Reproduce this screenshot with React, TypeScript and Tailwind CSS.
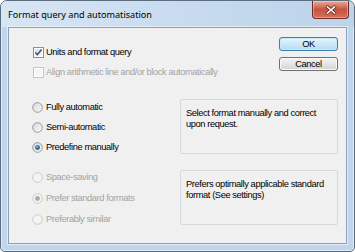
import React from 'react';

const txt = "font-['Liberation_Sans',Arial,sans-serif] text-[9.3px] tracking-[-0.4px] leading-[11px]";

const CheckBox = ({ checked, disabled }: { checked?: boolean; disabled?: boolean }) => (
  <svg width="11" height="11" viewBox="0 0 11 11" className="shrink-0">
    <defs>
      <linearGradient id={disabled ? 'cbd' : 'cbe'} x1="0" y1="0" x2="1" y2="1">
        <stop offset="0" stopColor={disabled ? '#f4f4f4' : '#d9dcdf'} />
        <stop offset="1" stopColor={disabled ? '#f4f4f4' : '#fafafa'} />
      </linearGradient>
    </defs>
    <rect x="0.5" y="0.5" width="10" height="10" fill="#fff" stroke={disabled ? '#c4c4c4' : '#8e8f8f'} />
    <rect x="2" y="2" width="7" height="7" fill={`url(#${disabled ? 'cbd' : 'cbe'})`} />
    {checked && <path d="M2.3 5.4 L4.4 7.6 L8.6 2.6" fill="none" stroke="#3f4e8c" strokeWidth="1.5" />}
  </svg>
);

const Radio = ({ checked, disabled }: { checked?: boolean; disabled?: boolean }) => (
  <svg width="11" height="11" viewBox="0 0 11 11" className="shrink-0">
    <defs>
      <linearGradient id="rbe" x1="0" y1="0" x2="1" y2="1">
        <stop offset="0" stopColor="#d6d8db" />
        <stop offset="1" stopColor="#fbfbfb" />
      </linearGradient>
      <radialGradient id="rdot" cx="0.4" cy="0.35" r="0.7">
        <stop offset="0" stopColor="#7fc0ec" />
        <stop offset="0.6" stopColor="#2d6aa3" />
        <stop offset="1" stopColor="#163f6b" />
      </radialGradient>
    </defs>
    <circle cx="5.5" cy="5.5" r="4.8" fill={disabled ? '#f4f4f4' : 'url(#rbe)'} stroke={disabled ? '#c6c6c6' : '#8e8f8f'} strokeWidth="0.9" />
    {checked && <circle cx="5.5" cy="5.5" r="2.4" fill={disabled ? '#a9a9a9' : 'url(#rdot)'} />}
  </svg>
);

const CheckRow = ({ label, checked, disabled }: { label: string; checked?: boolean; disabled?: boolean }) => (
  <div className="flex items-center h-[11px] gap-[2px]">
    <CheckBox checked={checked} disabled={disabled} />
    <span className={`${txt} whitespace-nowrap ${disabled ? 'text-[#a3a3a3]' : 'text-black'}`}>{label}</span>
  </div>
);

const RadioRow = ({ label, checked, disabled }: { label: string; checked?: boolean; disabled?: boolean }) => (
  <div className="flex items-center h-[11px] gap-[3px]">
    <Radio checked={checked} disabled={disabled} />
    <span className={`${txt} whitespace-nowrap ${disabled ? 'text-[#a3a3a3]' : 'text-black'}`}>{label}</span>
  </div>
);

const InfoBox = ({ children }: { children: React.ReactNode }) => (
  <div className="w-[158px] h-[55px] mr-[8px] rounded-[2px] border border-[#d5d9dd] pl-[5px] pt-[8px]">
    <p className={`${txt} text-black`}>{children}</p>
  </div>
);

const App = () => {
  return (
    <div className="w-[355px] h-[252px] flex flex-col rounded-t-[7px] rounded-b-[5px] border border-[#5d6d80] bg-[#c1d6ec] shadow-[inset_0_0_0_1px_rgba(255,255,255,0.55)] overflow-hidden">
      {/* title bar */}
      <div className="h-[26px] flex items-start justify-between pl-[7px] pr-[5px] bg-linear-to-r from-[#d7e6f5] via-[#c8dbef] to-[#bdd3ea]">
        <span className="mt-[7px] font-['Noto_Sans',Arial,sans-serif] text-[9.1px] leading-[13px] text-black">
          Format query and automatisation
        </span>
        <div className="w-[37px] h-[18px] flex items-center justify-center rounded-b-[4px] border border-t-0 border-[#6e2c22] bg-linear-to-b from-[#e9ab9a] via-[#c75440] to-[#d4705c] shadow-[inset_0_0_0_1px_rgba(255,255,255,0.35)]">
          <svg width="12" height="10" viewBox="0 0 12 10">
            <path d="M2.5 2 L9.5 8 M9.5 2 L2.5 8" stroke="#6a2419" strokeWidth="3" strokeLinecap="square" />
            <path d="M2.5 2 L9.5 8 M9.5 2 L2.5 8" stroke="#ffffff" strokeWidth="1.6" strokeLinecap="square" />
          </svg>
        </div>
      </div>

      {/* client area */}
      <div className="mx-[7px] h-[217px] border border-[#8ba1ba] bg-[#f0f0f0] shadow-[0_0_0_1px_rgba(255,255,255,0.5)] flex flex-col">
        <div className="mt-[9px] flex justify-between items-start">
          <div className="ml-[24px] mt-[10px] flex flex-col gap-[9px]">
            <CheckRow label="Units and format query" checked />
            <CheckRow label="Align arithmetic line and/or block automatically" disabled />
          </div>
          <div className="mr-[8px] flex flex-col gap-[6px]">
            <button className={`${txt} w-[59px] h-[14px] rounded-[3px] border border-[#3c7fb1] bg-linear-to-b from-[#e8f5fc] to-[#b2dcf4] shadow-[inset_0_0_0_1px_#c8e8f8] text-black flex items-center justify-center`}>
              OK
            </button>
            <button className={`${txt} w-[59px] h-[14px] rounded-[3px] border border-[#707070] bg-linear-to-b from-[#f3f3f3] via-[#e5e5e5] to-[#d2d2d2] shadow-[inset_0_0_0_1px_#fafafa] text-black flex items-center justify-center`}>
              Cancel
            </button>
          </div>
        </div>

        <div className="mt-[21px] flex justify-between items-start">
          <div className="ml-[23px] mt-[3px] flex flex-col gap-[9px]">
            <RadioRow label="Fully automatic" />
            <RadioRow label="Semi-automatic" />
            <RadioRow label="Predefine manually" checked />
          </div>
          <InfoBox>
            Select format manually and correct
            <br />
            upon request.
          </InfoBox>
        </div>

        <div className="mt-[16px] flex justify-between items-start">
          <div className="ml-[23px] mt-[2px] flex flex-col gap-[10px]">
            <RadioRow label="Space-saving" disabled />
            <RadioRow label="Prefer standard formats" checked disabled />
            <RadioRow label="Preferably similar" disabled />
          </div>
          <InfoBox>
            Prefers optimally applicable standard
            <br />
            format (See settings)
          </InfoBox>
        </div>
      </div>
    </div>
  );
};

export default App;
